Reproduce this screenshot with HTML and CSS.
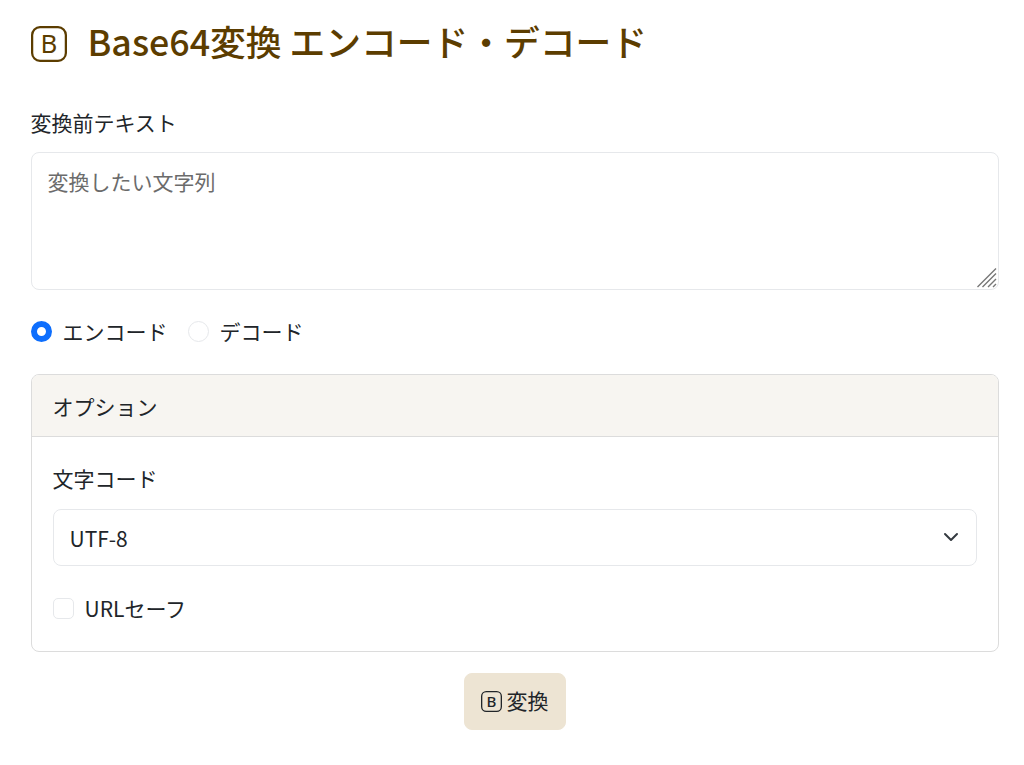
FILE: index.html
```html
<!DOCTYPE html>
<html lang="ja">

<head>
  <meta charset="UTF-8" />
  <title>Base64変換 エンコード・デコード</title>
  <meta name="viewport" content="width=device-width, initial-scale=1.0" />
  <link rel="stylesheet" href="styles.css">
</head>

<body>
  <div class="container">
    <h1 class="page-title">
      <svg class="bi-box title-icon" viewBox="0 0 16 16">
        <rect x="0.5" y="0.5" width="15" height="15" rx="3.5" />
        <text x="8" y="12">B</text>
      </svg>
      <span>Base64変換 エンコード・デコード</span>
    </h1>

    <div class="field">
      <label class="form-label" for="source">変換前テキスト</label>
      <div class="textarea-wrap">
        <textarea class="form-control" id="source" placeholder="変換したい文字列"></textarea>
        <!-- リサイズつまみ -->
        <svg class="resize-grip" viewBox="0 0 20 20">
          <path d="M0.5 19 19 0.5M5.5 19 19 5.5M11 19l8-8M16 19l3-3" />
        </svg>
      </div>
    </div>

    <div class="radios">
      <label class="form-check"><input type="radio" name="mode" checked><span>エンコード</span></label>
      <label class="form-check"><input type="radio" name="mode"><span>デコード</span></label>
    </div>

    <div class="card">
      <div class="card-header">オプション</div>
      <div class="card-body">
        <label class="form-label charset-label" for="charset">文字コード</label>
        <div class="select-wrap">
          <select class="form-select" id="charset">
            <option>UTF-8</option>
            <option>Shift_JIS</option>
            <option>EUC-JP</option>
          </select>
          <svg class="select-arrow" viewBox="0 0 16 16">
            <path d="m2 5 6 6 6-6" />
          </svg>
        </div>
        <label class="form-check url-safe"><input type="checkbox"><span>URLセーフ</span></label>
      </div>
    </div>

    <div class="actions">
      <button class="btn" type="button">
        <svg class="bi-box" viewBox="0 0 16 16">
          <rect x="0.5" y="0.5" width="15" height="15" rx="3.5" />
          <text x="8" y="12">B</text>
        </svg>
        変換
      </button>
    </div>
  </div>
</body>

</html>
```

FILE: styles.css
```css
html {
  font-size: 21px;
}

body {
  margin: 0;
  padding: 0;
  background: #fff;
  color: #212529;
  font-family: "Noto Sans CJK JP", "Noto Sans", sans-serif;
  line-height: 1.5;
}

.container {
  padding: 0 25.5px 0 30.5px;
}

.page-title {
  display: flex;
  align-items: center;
  gap: 21px;
  margin: 0;
  padding-top: 16px;
  color: #5c3d00;
  font-size: 35.75px;
  font-weight: 500;
  line-height: 50px;
}

.bi-box {
  width: 21px;
  height: 21px;
  flex: none;
}

.bi-box rect {
  fill: none;
  stroke: currentColor;
}

.bi-box text {
  fill: currentColor;
  font-family: "Noto Sans", sans-serif;
  font-size: 11.5px;
  font-weight: 500;
  text-anchor: middle;
}

.title-icon {
  width: 36px;
  height: 36px;
  margin-top: 5px;
}

.title-icon text {
  font-weight: 400;
}

.field {
  margin-top: 41px;
}

.form-label {
  display: block;
  margin-bottom: 13px;
}

.textarea-wrap {
  position: relative;
}

.form-control {
  display: block;
  box-sizing: border-box;
  width: 100%;
  height: 138px;
  padding: 13px 16px;
  border: 1px solid #e6e8eb;
  border-radius: 8px;
  color: #212529;
  font: inherit;
  resize: none;
}

.form-control::placeholder {
  color: #6b6b6b;
}

.resize-grip {
  position: absolute;
  right: 1.5px;
  bottom: 1.5px;
  width: 20px;
  height: 20px;
  fill: none;
  stroke: #777;
  stroke-width: 1.4;
  pointer-events: none;
}

.radios {
  display: flex;
  gap: 20px;
  margin-top: 26px;
}

.form-check {
  display: flex;
  align-items: center;
  gap: 11px;
}

.form-check input {
  appearance: none;
  width: 21px;
  height: 21px;
  margin: 0;
  border: 1px solid #e6e8eb;
  background: #fff;
}

input[type="radio"] {
  border-radius: 50%;
}

input[type="radio"]:checked {
  border: 6px solid #0d6efd;
}

input[type="checkbox"] {
  border-radius: 5px;
}

.card {
  margin-top: 27px;
  border: 1px solid #dcdcdc;
  border-radius: 8px;
  overflow: hidden;
}

.card-header {
  padding: 16px 21px 13px;
  border-bottom: 1px solid #dcdcdc;
  background: #f7f5f1;
}

.card-body {
  padding: 26px 21px 26px;
}

.charset-label {
  margin-bottom: 15px;
}

.select-wrap {
  position: relative;
}

.form-select {
  appearance: none;
  display: block;
  box-sizing: border-box;
  width: 100%;
  height: 57px;
  padding: 2px 16px 0;
  border: 1px solid #e6e8eb;
  border-radius: 8px;
  background: #fff;
  color: #212529;
  font: inherit;
}

.select-arrow {
  position: absolute;
  top: 20px;
  right: 18px;
  width: 16px;
  height: 16px;
  fill: none;
  stroke: #343a40;
  stroke-width: 2;
  stroke-linecap: round;
  stroke-linejoin: round;
}

.url-safe {
  margin-top: 27px;
}

.actions {
  display: flex;
  justify-content: center;
  margin-top: 21px;
}

.btn {
  display: flex;
  align-items: center;
  gap: 5px;
  padding: 0 16px;
  height: 57px;
  border: 1px solid #ede4d3;
  border-radius: 8px;
  background: #ede4d3;
  color: #212529;
  font: inherit;
}
```
